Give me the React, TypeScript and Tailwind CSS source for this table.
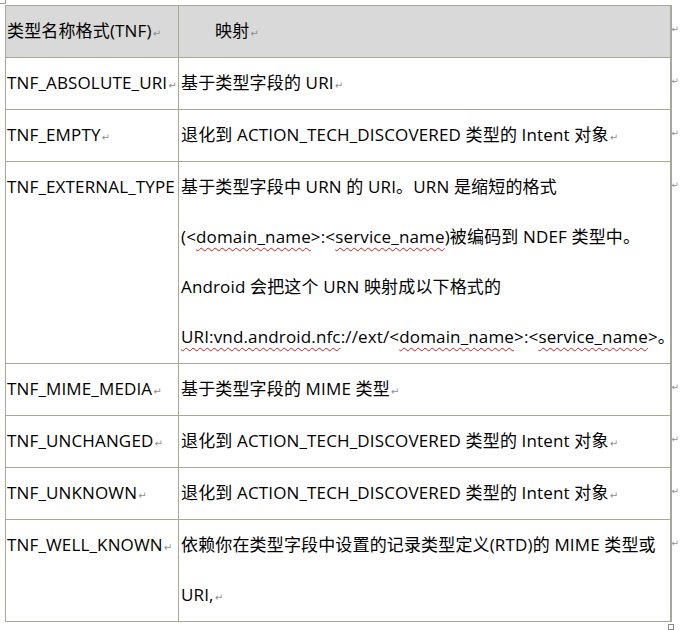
import React from "react";

const Mark = () => (
  <span className="font-['DejaVu_Sans',sans-serif] text-[10px] leading-none text-[#8e8e8e] ml-[1px] tracking-normal">↵</span>
);

const W = ({ children }: { children: React.ReactNode }) => (
  <span className="underline decoration-wavy decoration-[#c81e1e] decoration-1 underline-offset-[4px]">{children}</span>
);

const cellL =
  "border border-[#a9a898] align-top p-0 pl-[1px] pb-[1px] leading-[50px] whitespace-nowrap overflow-visible";
const cellR =
  "border border-[#a9a898] border-r-2 align-top p-0 pl-[2px] pb-[1px] leading-[50px] whitespace-nowrap overflow-visible";
const cellM = "align-top p-0 pt-[11px] leading-none border-0";

const RowEnd = () => (
  <td className={cellM}>
    <span className="font-['DejaVu_Sans',sans-serif] text-[9px] leading-none text-[#8e8e8e] tracking-normal">↵</span>
  </td>
);

export default function App() {
  return (
    <div className="bg-white w-[681px] h-[630px] overflow-hidden font-['Open_Sans','Noto_Sans_CJK_SC',sans-serif] text-[17px] tracking-[0.15px] text-black">
      <div className="relative pl-[5px] pt-[5px]">
        <div className="absolute left-0 top-0 w-[6px] h-[4px] border-r border-b border-[#9a9a9a]" />
        <div className="relative w-fit">
          <table className="border-collapse table-fixed w-[674px]">
            <colgroup>
              <col className="w-[173px]" />
              <col className="w-[492px]" />
              <col className="w-[9px]" />
            </colgroup>
            <tbody>
              <tr>
                <td className={cellL + " bg-[#d9d9d9]"}>
                  类型名称格式(TNF)
                  <Mark />
                </td>
                <td className={cellR + " bg-[#d9d9d9] pl-[36px]"}>
                  映射
                  <Mark />
                </td>
                <RowEnd />
              </tr>
              <tr>
                <td className={cellL}>
                  TNF_ABSOLUTE_URI
                  <Mark />
                </td>
                <td className={cellR}>
                  基于类型字段的 URI
                  <Mark />
                </td>
                <RowEnd />
              </tr>
              <tr>
                <td className={cellL}>
                  TNF_EMPTY
                  <Mark />
                </td>
                <td className={cellR}>
                  退化到 ACTION_TECH_DISCOVERED 类型的 Intent 对象
                  <Mark />
                </td>
                <RowEnd />
              </tr>
              <tr>
                <td className={cellL}>TNF_EXTERNAL_TYPE</td>
                <td className={cellR}>
                  基于类型字段中 URN 的 URI。URN 是缩短的格式
                  <br />
                  (&lt;<W>domain_name</W>&gt;:&lt;<W>service_name</W>)被编码到 NDEF 类型中。
                  <br />
                  Android 会把这个 URN 映射成以下格式的
                  <br />
                  <W>URI:vnd.android.nfc</W>://ext/&lt;<W>domain_name</W>&gt;:&lt;<W>service_name</W>&gt;。
                </td>
                <RowEnd />
              </tr>
              <tr>
                <td className={cellL}>
                  TNF_MIME_MEDIA
                  <Mark />
                </td>
                <td className={cellR}>
                  基于类型字段的 MIME 类型
                  <Mark />
                </td>
                <RowEnd />
              </tr>
              <tr>
                <td className={cellL}>
                  TNF_UNCHANGED
                  <Mark />
                </td>
                <td className={cellR}>
                  退化到 ACTION_TECH_DISCOVERED 类型的 Intent 对象
                  <Mark />
                </td>
                <RowEnd />
              </tr>
              <tr>
                <td className={cellL}>
                  TNF_UNKNOWN
                  <Mark />
                </td>
                <td className={cellR}>
                  退化到 ACTION_TECH_DISCOVERED 类型的 Intent 对象
                  <Mark />
                </td>
                <RowEnd />
              </tr>
              <tr>
                <td className={cellL}>
                  TNF_WELL_KNOWN
                  <Mark />
                </td>
                <td className={cellR}>
                  依赖你在类型字段中设置的记录类型定义(RTD)的 MIME 类型或
                  <br />
                  URI,
                  <Mark />
                </td>
                <RowEnd />
              </tr>
            </tbody>
          </table>
          <div className="absolute left-[663px] bottom-[-8px] w-[6px] h-[6px] border border-[#8a8a8a] bg-white" />
        </div>
      </div>
    </div>
  );
}
